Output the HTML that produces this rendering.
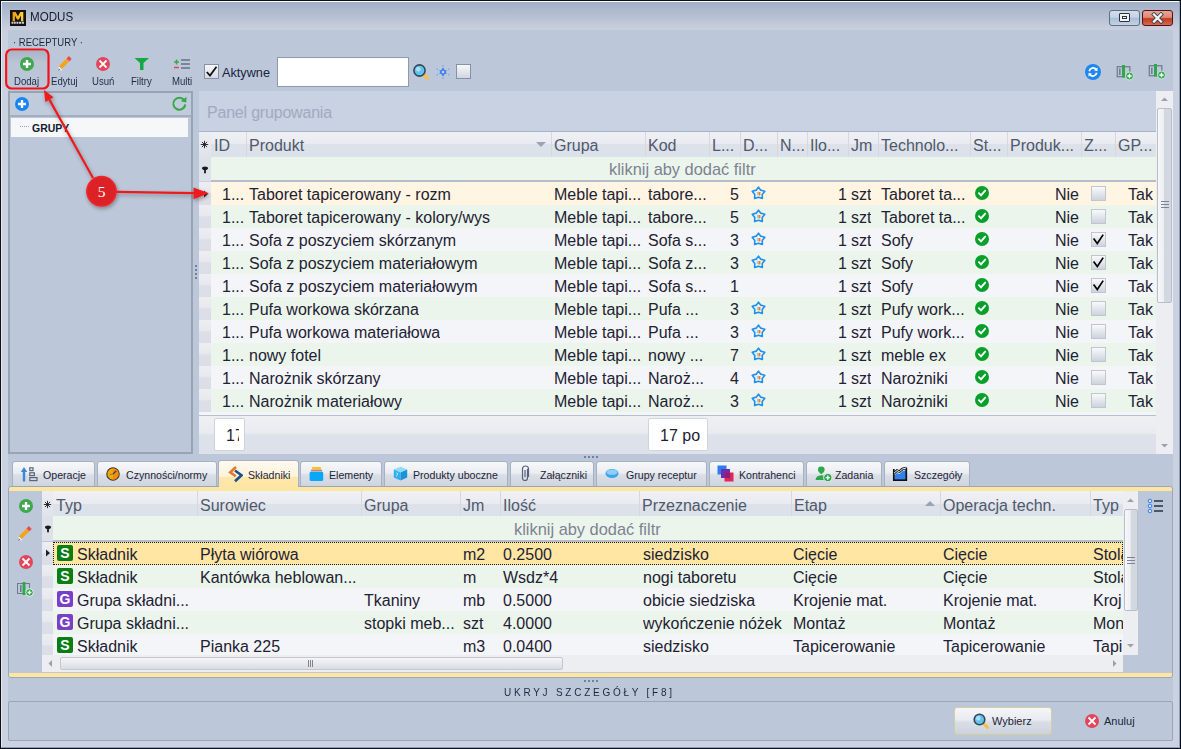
<!DOCTYPE html><html><head><meta charset="utf-8"><style>
*{box-sizing:border-box;margin:0;padding:0}
html,body{width:1181px;height:749px;overflow:hidden;background:#bccadb;font-family:"Liberation Sans", sans-serif;}
.a{position:absolute}
.t{position:absolute;white-space:nowrap;line-height:1}
.cell{position:absolute;white-space:nowrap;overflow:hidden;font-size:16px;line-height:25px;color:#1e2233}
.hd{position:absolute;white-space:nowrap;overflow:hidden;font-size:16px;line-height:27px;color:#4f596b}
</style></head><body>
<div class="a" style="left:0;top:0;width:1181px;height:749px;background:#0b0f18"></div>
<div class="a" style="left:1px;top:1px;width:1179px;height:747px;background:#8d9dbd"></div>
<div class="a" style="left:1px;top:1px;width:1178px;height:746px;background:#e6ebf3"></div>
<div class="a" style="left:1px;top:1px;width:1178px;height:1px;background:#fbfcff"></div>
<div class="a" style="left:2px;top:2px;width:1177px;height:745px;background:linear-gradient(#a2afc8 0px,#c9cfdd 27px,#cbd2df 40px,#cbd2df 100%)"></div>
<div class="a" style="left:8px;top:30px;width:1165px;height:711px;background:#bcc8d9"></div>
<svg class="a" style="left:10px;top:10px" width="16" height="16" viewBox="0 0 16 16"><defs><linearGradient id="lg" x1="0" x2="1" y1="0" y2="0"><stop offset="0" stop-color="#f39a0c"/><stop offset="1" stop-color="#ffd43a"/></linearGradient></defs><rect x="0" y="0" width="16" height="16" fill="#121212"/><path d="M2.6 11.2 V2 H5.6 L7.95 6.3 L10.3 2 H13.3 V11.2 H11 V5.6 L8.8 9.6 H7.1 L4.9 5.6 V11.2 Z" fill="url(#lg)"/><path d="M1.5 12.7 H3.5 M4 12.7 H5.8 M6.4 12.7 H8.4 M9 12.7 H11 M11.6 12.7 H14" stroke="#cfcfcf" stroke-width="2" /></svg>
<div class="t" style="left:30px;top:10px;font-size:11.6px;color:#141a2e;transform:scaleY(1.08);transform-origin:0 0">MODUS</div>
<div class="a" style="left:1109px;top:10px;width:31px;height:16px;border:1px solid #5d6e85;border-radius:3px;background:linear-gradient(#d3deea 0%,#c6d3e3 45%,#a9bdd4 50%,#c3d3e5 100%)"></div>
<div class="a" style="left:1119px;top:13px;width:11px;height:9px;border:1px solid #2a3344;border-radius:1px;background:#f2f2f2"></div>
<div class="a" style="left:1122px;top:16px;width:5px;height:3px;border:1px solid #2a3344"></div>
<div class="a" style="left:1142px;top:10px;width:31px;height:16px;border:1px solid #52121a;border-radius:3px;background:linear-gradient(#eaa493 0%,#de8b77 45%,#c03c1e 55%,#d86a52 100%)"></div>
<svg class="a" style="left:1150px;top:12px" width="15" height="12" viewBox="0 0 15 12"><path d="M4 2.5 L11 9.5 M11 2.5 L4 9.5" stroke="#3a3f4f" stroke-width="4" stroke-linecap="square"/><path d="M4 2.5 L11 9.5 M11 2.5 L4 9.5" stroke="#f4f4f4" stroke-width="2.3" stroke-linecap="square"/></svg>
<div class="t" style="left:13px;top:37px;font-size:9.5px;color:#1e2740;transform:scaleY(1.15);transform-origin:0 0">· RECEPTURY ·</div>
<div class="a" style="left:8px;top:51px;width:39px;height:37px;background:linear-gradient(#a9b4c6,#b9c4d4 30%,#bcc7d7)"></div>
<svg class="a" style="left:20px;top:57px" width="14" height="14" viewBox="0 0 14 14"><circle cx="7" cy="7" r="7" fill="#3fa84e"/><path d="M3 7 H11 M7 3 V11" stroke="#fff" stroke-width="2.4"/></svg>
<svg class="a" style="left:57px;top:56px" width="16" height="16" viewBox="0 0 16 16"><path d="M3.2 11.6 L11.2 3.6" stroke="#f7a21b" stroke-width="4"/><path d="M11 3.8 L13.3 1.5" stroke="#e4485e" stroke-width="4"/><path d="M2.6 12.2 L4 13.6 M1.8 11.4 L4.6 14.2" stroke="#fff" stroke-width="1.3"/><path d="M1 15 L2.5 12.5 L3.5 13.5 Z" fill="#6b7585"/></svg>
<svg class="a" style="left:96px;top:57px" width="14" height="14" viewBox="0 0 14 14"><circle cx="7" cy="7" r="7" fill="#e3465b"/><path d="M3.5 3.5 L10.5 10.5 M10.5 3.5 L3.5 10.5" stroke="#fff" stroke-width="1.8"/></svg>
<svg class="a" style="left:134px;top:57px" width="16" height="14" viewBox="0 0 16 14"><path d="M0.5 1 H15 L9.5 6 V13 H6 V6 Z" fill="#17a843"/></svg>
<svg class="a" style="left:173px;top:57px" width="18" height="14" viewBox="0 0 18 14"><path d="M1 5 H6 M3.5 2.5 V7.5" stroke="#39a84a" stroke-width="1.5"/><path d="M1 10.5 H6" stroke="#e3465b" stroke-width="1.5"/><path d="M8 3 H17 M8 7 H17 M8 11 H17" stroke="#7b8698" stroke-width="2"/></svg>
<div class="t" style="left:14px;top:76px;font-size:9.6px;color:#1f2a44;transform:scaleY(1.15);transform-origin:0 0">Dodaj</div>
<div class="t" style="left:51px;top:76px;font-size:9.6px;color:#1f2a44;transform:scaleY(1.15);transform-origin:0 0">Edytuj</div>
<div class="t" style="left:92px;top:76px;font-size:9.6px;color:#1f2a44;transform:scaleY(1.15);transform-origin:0 0">Usuń</div>
<div class="t" style="left:131px;top:76px;font-size:9.6px;color:#1f2a44;transform:scaleY(1.15);transform-origin:0 0">Filtry</div>
<div class="t" style="left:172px;top:76px;font-size:9.6px;color:#1f2a44;transform:scaleY(1.15);transform-origin:0 0">Multi</div>
<div class="a" style="left:204px;top:64px;width:15px;height:15px;border:1px solid #8592a6;background:linear-gradient(#f7f8fa,#d5dae3)"></div>
<svg class="a" style="left:205px;top:65px" width="13" height="13" viewBox="0 0 13 13"><path d="M1.8 7 L5 10.6 L11.5 1.8" stroke="#111" stroke-width="1.8" fill="none"/></svg>
<div class="t" style="left:222px;top:67px;font-size:12.7px;color:#1b2340">Aktywne</div>
<div class="a" style="left:277px;top:57px;width:132px;height:30px;border:1px solid #8e9aab;background:#fff"></div>
<svg class="a" style="left:411px;top:62px" width="19" height="19" viewBox="0 0 19 19"><path d="M12.5 12.5 L16.5 16.5" stroke="#f8bf45" stroke-width="3" stroke-linecap="round"/><circle cx="8.5" cy="8.5" r="5.6" fill="#62c4ec" stroke="#3b4656" stroke-width="1.6"/><circle cx="7.3" cy="7.3" r="2.3" fill="#a8e2f8"/></svg>
<svg class="a" style="left:436px;top:65px" width="14" height="14" viewBox="0 0 14 14"><path d="M7 2.2 L10.8 8.8 H3.2 Z" fill="#3a80f2"/><path d="M7 11.8 L10.8 5.2 H3.2 Z" fill="#3a80f2"/><circle cx="7" cy="7" r="1.3" fill="#c6d6f2"/><path d="M7 0 V1.3 M7 12.7 V14 M1.2 3.6 L1.2 4.9 M12.8 3.6 L12.8 4.9 M1.2 9.1 L1.2 10.4 M12.8 9.1 L12.8 10.4" stroke="#5a95f0" stroke-width="1"/></svg>
<div class="a" style="left:456px;top:64px;width:15px;height:15px;border:1px solid #8592a6;background:linear-gradient(#f7f8fa,#d1d6df)"></div>
<svg class="a" style="left:1085px;top:64px" width="16" height="16" viewBox="0 0 16 16"><circle cx="8" cy="8" r="8" fill="#1e86f0"/><path d="M4.2 7.2 A4 4 0 0 1 11.3 5.6" stroke="#fff" stroke-width="1.8" fill="none"/><path d="M12.6 3.6 L12.4 7.2 L9 6.2 Z" fill="#fff"/><path d="M11.8 8.8 A4 4 0 0 1 4.7 10.4" stroke="#fff" stroke-width="1.8" fill="none"/><path d="M3.4 12.4 L3.6 8.8 L7 9.8 Z" fill="#fff"/></svg>
<svg class="a" style="left:1116px;top:64px" width="19" height="17" viewBox="0 0 19 17"><rect x="1.3" y="2.7" width="12.5" height="10" fill="none" stroke="#737f91" stroke-width="1.3"/><rect x="3" y="4.5" width="1.6" height="6.5" fill="#737f91"/><rect x="6" y="1" width="3" height="12.5" fill="#2ea84a"/><circle cx="13.5" cy="12" r="4" fill="#2ea84a" stroke="#dfe7ee" stroke-width="0.9"/><path d="M11.3 12 H15.7 M13.5 9.8 V14.2" stroke="#fff" stroke-width="1.4"/></svg>
<svg class="a" style="left:1148px;top:63px" width="19" height="17" viewBox="0 0 19 17"><rect x="1.3" y="2.7" width="12.5" height="10" fill="none" stroke="#737f91" stroke-width="1.3"/><rect x="3" y="4.5" width="1.6" height="6.5" fill="#737f91"/><rect x="6" y="1" width="3" height="12.5" fill="#2ea84a"/><circle cx="13.5" cy="12" r="4" fill="#2ea84a" stroke="#dfe7ee" stroke-width="0.9"/><path d="M11.3 12 H15.7 M13.5 9.8 V14.2" stroke="#fff" stroke-width="1.4"/></svg>
<div class="a" style="left:8px;top:91px;width:185px;height:363px;border:2px solid #98a3b4;background:#bcc8d9"></div>
<div class="a" style="left:10px;top:115px;width:181px;height:2px;background:#a3aebe"></div>
<div class="a" style="left:10px;top:93px;width:181px;height:22px;background:#c0cbdb"></div>
<svg class="a" style="left:15px;top:97px" width="14" height="14" viewBox="0 0 14 14"><circle cx="7" cy="7" r="7" fill="#1b84f5"/><path d="M3 7 H11 M7 3 V11" stroke="#fff" stroke-width="2.4"/></svg>
<svg class="a" style="left:171px;top:95px" width="17" height="17" viewBox="0 0 17 17"><path d="M13.2 5.2 A6 6 0 1 0 14.3 9.5" stroke="#36a848" stroke-width="2" fill="none"/><path d="M15.6 1.8 L15.2 7.6 L9.8 6.2 Z" fill="#36a848"/></svg>
<div class="a" style="left:11px;top:118px;width:177px;height:19px;background:#f6f7f9"></div>
<div class="a" style="left:20px;top:126px;width:9px;height:1px;border-top:1px dotted #9aa3b0"></div>
<div class="t" style="left:32px;top:123px;font-size:10.5px;font-weight:bold;color:#141b30">GRUPY</div>
<div class="a" style="left:195px;top:265px;width:2px;height:2px;background:#7081a0"></div>
<div class="a" style="left:195px;top:269px;width:2px;height:2px;background:#7081a0"></div>
<div class="a" style="left:195px;top:273px;width:2px;height:2px;background:#7081a0"></div>
<div class="a" style="left:195px;top:277px;width:2px;height:2px;background:#7081a0"></div>
<div class="a" style="left:199px;top:91px;width:972px;height:363px;background:#c8d2e2"></div>
<div class="t" style="left:207px;top:105px;font-size:16px;letter-spacing:-0.2px;color:#a0aabe">Panel grupowania</div>
<div class="a" style="left:199px;top:131px;width:957px;height:1px;background:#a9b3c4"></div>
<div class="a" style="left:199px;top:132px;width:957px;height:25px;background:linear-gradient(#f0f1f5 0%,#e9ebf1 47%,#dde1e9 48%,#dde1e9 100%)"></div>
<div class="a" style="left:246px;top:132px;width:1px;height:25px;background:#d3d8e1"></div>
<div class="hd" style="left:214px;top:132px;width:31px">ID</div>
<div class="a" style="left:551px;top:132px;width:1px;height:25px;background:#d3d8e1"></div>
<div class="hd" style="left:249px;top:132px;width:301px">Produkt</div>
<div class="a" style="left:645px;top:132px;width:1px;height:25px;background:#d3d8e1"></div>
<div class="hd" style="left:554px;top:132px;width:90px">Grupa</div>
<div class="a" style="left:709px;top:132px;width:1px;height:25px;background:#d3d8e1"></div>
<div class="hd" style="left:648px;top:132px;width:60px">Kod</div>
<div class="a" style="left:740px;top:132px;width:1px;height:25px;background:#d3d8e1"></div>
<div class="hd" style="left:712px;top:132px;width:27px">L...</div>
<div class="a" style="left:777px;top:132px;width:1px;height:25px;background:#d3d8e1"></div>
<div class="hd" style="left:743px;top:132px;width:33px">D...</div>
<div class="a" style="left:807px;top:132px;width:1px;height:25px;background:#d3d8e1"></div>
<div class="hd" style="left:780px;top:132px;width:26px">N...</div>
<div class="a" style="left:848px;top:132px;width:1px;height:25px;background:#d3d8e1"></div>
<div class="hd" style="left:810px;top:132px;width:37px">Ilo...</div>
<div class="a" style="left:878px;top:132px;width:1px;height:25px;background:#d3d8e1"></div>
<div class="hd" style="left:851px;top:132px;width:26px">Jm</div>
<div class="a" style="left:970px;top:132px;width:1px;height:25px;background:#d3d8e1"></div>
<div class="hd" style="left:881px;top:132px;width:88px">Technolo...</div>
<div class="a" style="left:1007px;top:132px;width:1px;height:25px;background:#d3d8e1"></div>
<div class="hd" style="left:973px;top:132px;width:33px">St...</div>
<div class="a" style="left:1081px;top:132px;width:1px;height:25px;background:#d3d8e1"></div>
<div class="hd" style="left:1010px;top:132px;width:70px">Produk...</div>
<div class="a" style="left:1115px;top:132px;width:1px;height:25px;background:#d3d8e1"></div>
<div class="hd" style="left:1084px;top:132px;width:30px">Z...</div>
<div class="a" style="left:1156px;top:132px;width:1px;height:25px;background:#d3d8e1"></div>
<div class="hd" style="left:1118px;top:132px;width:37px">GP...</div>
<svg class="a" style="left:536px;top:142px" width="10" height="6" viewBox="0 0 10 6"><path d="M0 0 H10 L5 5 Z" fill="#9aa4b3"/></svg>
<div class="a" style="left:199px;top:132px;width:12px;height:25px;background:linear-gradient(#eceef3,#dfe3ea)"></div>
<svg class="a" style="left:200px;top:140px" width="9" height="9" viewBox="0 0 9 9"><path d="M4.5 0.8 V8.2 M0.8 4.5 H8.2 M1.9 1.9 L7.1 7.1 M7.1 1.9 L1.9 7.1" stroke="#1a1a1a" stroke-width="0.9"/></svg>
<div class="a" style="left:199px;top:157px;width:957px;height:24px;background:#ebf5eb"></div>
<div class="a" style="left:199px;top:157px;width:12px;height:24px;background:#dde1e8"></div>
<svg class="a" style="left:201px;top:166px" width="8" height="8" viewBox="0 0 8 8"><ellipse cx="4" cy="2.3" rx="3" ry="1.8" fill="#1a1a1a"/><rect x="3.1" y="3.5" width="1.8" height="3.8" fill="#1a1a1a"/></svg>
<div class="t" style="left:609px;top:161px;font-size:16.4px;color:#7d8292">kliknij aby dodać filtr</div>
<div class="a" style="left:211px;top:180px;width:945px;height:2px;background:#b4bdcb"></div>
<div class="a" style="left:211px;top:182px;width:945px;height:23px;background:#fff5e2"></div>
<div class="a" style="left:199px;top:182px;width:12px;height:23px;background:linear-gradient(#eceef2 0%,#e7e9ee 45%,#dcdfe7 52%,#dbdee6 100%)"></div>
<div class="cell" style="left:222px;top:182px">1...</div>
<div class="cell" style="left:249px;top:182px">Taboret tapicerowany - rozm</div>
<div class="cell" style="left:554px;top:182px">Meble tapi...</div>
<div class="cell" style="left:648px;top:182px">tabore...</div>
<div class="cell" style="left:709px;top:182px;width:30px;text-align:right">5</div>
<svg class="a" style="left:751px;top:186px" width="15" height="14" viewBox="0 0 15 14"><path d="M7.50 1.2 L9.79 4.14 L13.78 5.26 L11.21 8.51 L11.38 12.4 L7.50 11.20 L3.62 12.4 L3.79 8.51 L1.22 5.26 L5.21 4.14 Z" fill="none" stroke="#1f8ff0" stroke-width="1.6" stroke-linejoin="round"/><rect x="5.8" y="5.8" width="1.8" height="3.4" fill="#9ccbf2"/><rect x="7.6" y="6" width="1.8" height="3.4" fill="#f77a10"/></svg>
<div class="cell" style="left:808px;top:182px;width:39px;text-align:right">1</div>
<div class="cell" style="left:851px;top:182px">szt</div>
<div class="cell" style="left:881px;top:182px">Taboret ta...</div>
<svg class="a" style="left:975px;top:186px" width="14" height="14" viewBox="0 0 14 14"><circle cx="7" cy="7" r="7" fill="#07a02b"/><path d="M3.9 7.2 L6 9.3 L10.2 4.6" stroke="#fff" stroke-width="1.9" fill="none" stroke-linecap="round"/></svg>
<div class="cell" style="left:1007px;top:182px;width:72px;text-align:right">Nie</div>
<div class="a" style="left:1091px;top:186px;width:15px;height:15px;border:1px solid #c0c5cf;background:linear-gradient(#f9fafb,#cdd3de)"></div>
<div class="cell" style="left:1128px;top:182px">Tak</div>
<div class="a" style="left:211px;top:205px;width:945px;height:23px;background:#ebf5eb"></div>
<div class="a" style="left:199px;top:205px;width:12px;height:23px;background:linear-gradient(#eceef2 0%,#e7e9ee 45%,#dcdfe7 52%,#dbdee6 100%)"></div>
<div class="cell" style="left:222px;top:205px">1...</div>
<div class="cell" style="left:249px;top:205px">Taboret tapicerowany - kolory/wys</div>
<div class="cell" style="left:554px;top:205px">Meble tapi...</div>
<div class="cell" style="left:648px;top:205px">tabore...</div>
<div class="cell" style="left:709px;top:205px;width:30px;text-align:right">5</div>
<svg class="a" style="left:751px;top:209px" width="15" height="14" viewBox="0 0 15 14"><path d="M7.50 1.2 L9.79 4.14 L13.78 5.26 L11.21 8.51 L11.38 12.4 L7.50 11.20 L3.62 12.4 L3.79 8.51 L1.22 5.26 L5.21 4.14 Z" fill="none" stroke="#1f8ff0" stroke-width="1.6" stroke-linejoin="round"/><rect x="5.8" y="5.8" width="1.8" height="3.4" fill="#9ccbf2"/><rect x="7.6" y="6" width="1.8" height="3.4" fill="#f77a10"/></svg>
<div class="cell" style="left:808px;top:205px;width:39px;text-align:right">1</div>
<div class="cell" style="left:851px;top:205px">szt</div>
<div class="cell" style="left:881px;top:205px">Taboret ta...</div>
<svg class="a" style="left:975px;top:209px" width="14" height="14" viewBox="0 0 14 14"><circle cx="7" cy="7" r="7" fill="#07a02b"/><path d="M3.9 7.2 L6 9.3 L10.2 4.6" stroke="#fff" stroke-width="1.9" fill="none" stroke-linecap="round"/></svg>
<div class="cell" style="left:1007px;top:205px;width:72px;text-align:right">Nie</div>
<div class="a" style="left:1091px;top:209px;width:15px;height:15px;border:1px solid #c0c5cf;background:linear-gradient(#f9fafb,#cdd3de)"></div>
<div class="cell" style="left:1128px;top:205px">Tak</div>
<div class="a" style="left:211px;top:228px;width:945px;height:23px;background:#f4f5f8"></div>
<div class="a" style="left:199px;top:228px;width:12px;height:23px;background:linear-gradient(#eceef2 0%,#e7e9ee 45%,#dcdfe7 52%,#dbdee6 100%)"></div>
<div class="cell" style="left:222px;top:228px">1...</div>
<div class="cell" style="left:249px;top:228px">Sofa z poszyciem skórzanym</div>
<div class="cell" style="left:554px;top:228px">Meble tapi...</div>
<div class="cell" style="left:648px;top:228px">Sofa s...</div>
<div class="cell" style="left:709px;top:228px;width:30px;text-align:right">3</div>
<svg class="a" style="left:751px;top:232px" width="15" height="14" viewBox="0 0 15 14"><path d="M7.50 1.2 L9.79 4.14 L13.78 5.26 L11.21 8.51 L11.38 12.4 L7.50 11.20 L3.62 12.4 L3.79 8.51 L1.22 5.26 L5.21 4.14 Z" fill="none" stroke="#1f8ff0" stroke-width="1.6" stroke-linejoin="round"/><rect x="5.8" y="5.8" width="1.8" height="3.4" fill="#9ccbf2"/><rect x="7.6" y="6" width="1.8" height="3.4" fill="#f77a10"/></svg>
<div class="cell" style="left:808px;top:228px;width:39px;text-align:right">1</div>
<div class="cell" style="left:851px;top:228px">szt</div>
<div class="cell" style="left:881px;top:228px">Sofy</div>
<svg class="a" style="left:975px;top:232px" width="14" height="14" viewBox="0 0 14 14"><circle cx="7" cy="7" r="7" fill="#07a02b"/><path d="M3.9 7.2 L6 9.3 L10.2 4.6" stroke="#fff" stroke-width="1.9" fill="none" stroke-linecap="round"/></svg>
<div class="cell" style="left:1007px;top:228px;width:72px;text-align:right">Nie</div>
<div class="a" style="left:1091px;top:232px;width:15px;height:15px;border:1px solid #c0c5cf;background:linear-gradient(#f9fafb,#cdd3de)"></div><svg class="a" style="left:1091px;top:232px" width="15" height="15" viewBox="0 0 15 15"><path d="M2.6 6.4 L6.3 11.4 L12.2 2.6" stroke="#000" stroke-width="1.7" fill="none"/></svg>
<div class="cell" style="left:1128px;top:228px">Tak</div>
<div class="a" style="left:211px;top:251px;width:945px;height:23px;background:#ebf5eb"></div>
<div class="a" style="left:199px;top:251px;width:12px;height:23px;background:linear-gradient(#eceef2 0%,#e7e9ee 45%,#dcdfe7 52%,#dbdee6 100%)"></div>
<div class="cell" style="left:222px;top:251px">1...</div>
<div class="cell" style="left:249px;top:251px">Sofa z poszyciem materiałowym</div>
<div class="cell" style="left:554px;top:251px">Meble tapi...</div>
<div class="cell" style="left:648px;top:251px">Sofa z...</div>
<div class="cell" style="left:709px;top:251px;width:30px;text-align:right">3</div>
<svg class="a" style="left:751px;top:255px" width="15" height="14" viewBox="0 0 15 14"><path d="M7.50 1.2 L9.79 4.14 L13.78 5.26 L11.21 8.51 L11.38 12.4 L7.50 11.20 L3.62 12.4 L3.79 8.51 L1.22 5.26 L5.21 4.14 Z" fill="none" stroke="#1f8ff0" stroke-width="1.6" stroke-linejoin="round"/><rect x="5.8" y="5.8" width="1.8" height="3.4" fill="#9ccbf2"/><rect x="7.6" y="6" width="1.8" height="3.4" fill="#f77a10"/></svg>
<div class="cell" style="left:808px;top:251px;width:39px;text-align:right">1</div>
<div class="cell" style="left:851px;top:251px">szt</div>
<div class="cell" style="left:881px;top:251px">Sofy</div>
<svg class="a" style="left:975px;top:255px" width="14" height="14" viewBox="0 0 14 14"><circle cx="7" cy="7" r="7" fill="#07a02b"/><path d="M3.9 7.2 L6 9.3 L10.2 4.6" stroke="#fff" stroke-width="1.9" fill="none" stroke-linecap="round"/></svg>
<div class="cell" style="left:1007px;top:251px;width:72px;text-align:right">Nie</div>
<div class="a" style="left:1091px;top:255px;width:15px;height:15px;border:1px solid #c0c5cf;background:linear-gradient(#f9fafb,#cdd3de)"></div><svg class="a" style="left:1091px;top:255px" width="15" height="15" viewBox="0 0 15 15"><path d="M2.6 6.4 L6.3 11.4 L12.2 2.6" stroke="#000" stroke-width="1.7" fill="none"/></svg>
<div class="cell" style="left:1128px;top:251px">Tak</div>
<div class="a" style="left:211px;top:274px;width:945px;height:23px;background:#f4f5f8"></div>
<div class="a" style="left:199px;top:274px;width:12px;height:23px;background:linear-gradient(#eceef2 0%,#e7e9ee 45%,#dcdfe7 52%,#dbdee6 100%)"></div>
<div class="cell" style="left:222px;top:274px">1...</div>
<div class="cell" style="left:249px;top:274px">Sofa z poszyciem materiałowym</div>
<div class="cell" style="left:554px;top:274px">Meble tapi...</div>
<div class="cell" style="left:648px;top:274px">Sofa s...</div>
<div class="cell" style="left:709px;top:274px;width:30px;text-align:right">1</div>
<div class="cell" style="left:808px;top:274px;width:39px;text-align:right">1</div>
<div class="cell" style="left:851px;top:274px">szt</div>
<div class="cell" style="left:881px;top:274px">Sofy</div>
<svg class="a" style="left:975px;top:278px" width="14" height="14" viewBox="0 0 14 14"><circle cx="7" cy="7" r="7" fill="#07a02b"/><path d="M3.9 7.2 L6 9.3 L10.2 4.6" stroke="#fff" stroke-width="1.9" fill="none" stroke-linecap="round"/></svg>
<div class="cell" style="left:1007px;top:274px;width:72px;text-align:right">Nie</div>
<div class="a" style="left:1091px;top:278px;width:15px;height:15px;border:1px solid #c0c5cf;background:linear-gradient(#f9fafb,#cdd3de)"></div><svg class="a" style="left:1091px;top:278px" width="15" height="15" viewBox="0 0 15 15"><path d="M2.6 6.4 L6.3 11.4 L12.2 2.6" stroke="#000" stroke-width="1.7" fill="none"/></svg>
<div class="cell" style="left:1128px;top:274px">Tak</div>
<div class="a" style="left:211px;top:297px;width:945px;height:23px;background:#ebf5eb"></div>
<div class="a" style="left:199px;top:297px;width:12px;height:23px;background:linear-gradient(#eceef2 0%,#e7e9ee 45%,#dcdfe7 52%,#dbdee6 100%)"></div>
<div class="cell" style="left:222px;top:297px">1...</div>
<div class="cell" style="left:249px;top:297px">Pufa workowa skórzana</div>
<div class="cell" style="left:554px;top:297px">Meble tapi...</div>
<div class="cell" style="left:648px;top:297px">Pufa ...</div>
<div class="cell" style="left:709px;top:297px;width:30px;text-align:right">3</div>
<svg class="a" style="left:751px;top:301px" width="15" height="14" viewBox="0 0 15 14"><path d="M7.50 1.2 L9.79 4.14 L13.78 5.26 L11.21 8.51 L11.38 12.4 L7.50 11.20 L3.62 12.4 L3.79 8.51 L1.22 5.26 L5.21 4.14 Z" fill="none" stroke="#1f8ff0" stroke-width="1.6" stroke-linejoin="round"/><rect x="5.8" y="5.8" width="1.8" height="3.4" fill="#9ccbf2"/><rect x="7.6" y="6" width="1.8" height="3.4" fill="#f77a10"/></svg>
<div class="cell" style="left:808px;top:297px;width:39px;text-align:right">1</div>
<div class="cell" style="left:851px;top:297px">szt</div>
<div class="cell" style="left:881px;top:297px">Pufy work...</div>
<svg class="a" style="left:975px;top:301px" width="14" height="14" viewBox="0 0 14 14"><circle cx="7" cy="7" r="7" fill="#07a02b"/><path d="M3.9 7.2 L6 9.3 L10.2 4.6" stroke="#fff" stroke-width="1.9" fill="none" stroke-linecap="round"/></svg>
<div class="cell" style="left:1007px;top:297px;width:72px;text-align:right">Nie</div>
<div class="a" style="left:1091px;top:301px;width:15px;height:15px;border:1px solid #c0c5cf;background:linear-gradient(#f9fafb,#cdd3de)"></div>
<div class="cell" style="left:1128px;top:297px">Tak</div>
<div class="a" style="left:211px;top:320px;width:945px;height:23px;background:#f4f5f8"></div>
<div class="a" style="left:199px;top:320px;width:12px;height:23px;background:linear-gradient(#eceef2 0%,#e7e9ee 45%,#dcdfe7 52%,#dbdee6 100%)"></div>
<div class="cell" style="left:222px;top:320px">1...</div>
<div class="cell" style="left:249px;top:320px">Pufa workowa materiałowa</div>
<div class="cell" style="left:554px;top:320px">Meble tapi...</div>
<div class="cell" style="left:648px;top:320px">Pufa ...</div>
<div class="cell" style="left:709px;top:320px;width:30px;text-align:right">3</div>
<svg class="a" style="left:751px;top:324px" width="15" height="14" viewBox="0 0 15 14"><path d="M7.50 1.2 L9.79 4.14 L13.78 5.26 L11.21 8.51 L11.38 12.4 L7.50 11.20 L3.62 12.4 L3.79 8.51 L1.22 5.26 L5.21 4.14 Z" fill="none" stroke="#1f8ff0" stroke-width="1.6" stroke-linejoin="round"/><rect x="5.8" y="5.8" width="1.8" height="3.4" fill="#9ccbf2"/><rect x="7.6" y="6" width="1.8" height="3.4" fill="#f77a10"/></svg>
<div class="cell" style="left:808px;top:320px;width:39px;text-align:right">1</div>
<div class="cell" style="left:851px;top:320px">szt</div>
<div class="cell" style="left:881px;top:320px">Pufy work...</div>
<svg class="a" style="left:975px;top:324px" width="14" height="14" viewBox="0 0 14 14"><circle cx="7" cy="7" r="7" fill="#07a02b"/><path d="M3.9 7.2 L6 9.3 L10.2 4.6" stroke="#fff" stroke-width="1.9" fill="none" stroke-linecap="round"/></svg>
<div class="cell" style="left:1007px;top:320px;width:72px;text-align:right">Nie</div>
<div class="a" style="left:1091px;top:324px;width:15px;height:15px;border:1px solid #c0c5cf;background:linear-gradient(#f9fafb,#cdd3de)"></div>
<div class="cell" style="left:1128px;top:320px">Tak</div>
<div class="a" style="left:211px;top:343px;width:945px;height:23px;background:#ebf5eb"></div>
<div class="a" style="left:199px;top:343px;width:12px;height:23px;background:linear-gradient(#eceef2 0%,#e7e9ee 45%,#dcdfe7 52%,#dbdee6 100%)"></div>
<div class="cell" style="left:222px;top:343px">1...</div>
<div class="cell" style="left:249px;top:343px">nowy fotel</div>
<div class="cell" style="left:554px;top:343px">Meble tapi...</div>
<div class="cell" style="left:648px;top:343px">nowy ...</div>
<div class="cell" style="left:709px;top:343px;width:30px;text-align:right">7</div>
<svg class="a" style="left:751px;top:347px" width="15" height="14" viewBox="0 0 15 14"><path d="M7.50 1.2 L9.79 4.14 L13.78 5.26 L11.21 8.51 L11.38 12.4 L7.50 11.20 L3.62 12.4 L3.79 8.51 L1.22 5.26 L5.21 4.14 Z" fill="none" stroke="#1f8ff0" stroke-width="1.6" stroke-linejoin="round"/><rect x="5.8" y="5.8" width="1.8" height="3.4" fill="#9ccbf2"/><rect x="7.6" y="6" width="1.8" height="3.4" fill="#f77a10"/></svg>
<div class="cell" style="left:808px;top:343px;width:39px;text-align:right">1</div>
<div class="cell" style="left:851px;top:343px">szt</div>
<div class="cell" style="left:881px;top:343px">meble ex</div>
<svg class="a" style="left:975px;top:347px" width="14" height="14" viewBox="0 0 14 14"><circle cx="7" cy="7" r="7" fill="#07a02b"/><path d="M3.9 7.2 L6 9.3 L10.2 4.6" stroke="#fff" stroke-width="1.9" fill="none" stroke-linecap="round"/></svg>
<div class="cell" style="left:1007px;top:343px;width:72px;text-align:right">Nie</div>
<div class="a" style="left:1091px;top:347px;width:15px;height:15px;border:1px solid #c0c5cf;background:linear-gradient(#f9fafb,#cdd3de)"></div>
<div class="cell" style="left:1128px;top:343px">Tak</div>
<div class="a" style="left:211px;top:366px;width:945px;height:23px;background:#f4f5f8"></div>
<div class="a" style="left:199px;top:366px;width:12px;height:23px;background:linear-gradient(#eceef2 0%,#e7e9ee 45%,#dcdfe7 52%,#dbdee6 100%)"></div>
<div class="cell" style="left:222px;top:366px">1...</div>
<div class="cell" style="left:249px;top:366px">Narożnik skórzany</div>
<div class="cell" style="left:554px;top:366px">Meble tapi...</div>
<div class="cell" style="left:648px;top:366px">Naroż...</div>
<div class="cell" style="left:709px;top:366px;width:30px;text-align:right">4</div>
<svg class="a" style="left:751px;top:370px" width="15" height="14" viewBox="0 0 15 14"><path d="M7.50 1.2 L9.79 4.14 L13.78 5.26 L11.21 8.51 L11.38 12.4 L7.50 11.20 L3.62 12.4 L3.79 8.51 L1.22 5.26 L5.21 4.14 Z" fill="none" stroke="#1f8ff0" stroke-width="1.6" stroke-linejoin="round"/><rect x="5.8" y="5.8" width="1.8" height="3.4" fill="#9ccbf2"/><rect x="7.6" y="6" width="1.8" height="3.4" fill="#f77a10"/></svg>
<div class="cell" style="left:808px;top:366px;width:39px;text-align:right">1</div>
<div class="cell" style="left:851px;top:366px">szt</div>
<div class="cell" style="left:881px;top:366px">Narożniki</div>
<svg class="a" style="left:975px;top:370px" width="14" height="14" viewBox="0 0 14 14"><circle cx="7" cy="7" r="7" fill="#07a02b"/><path d="M3.9 7.2 L6 9.3 L10.2 4.6" stroke="#fff" stroke-width="1.9" fill="none" stroke-linecap="round"/></svg>
<div class="cell" style="left:1007px;top:366px;width:72px;text-align:right">Nie</div>
<div class="a" style="left:1091px;top:370px;width:15px;height:15px;border:1px solid #c0c5cf;background:linear-gradient(#f9fafb,#cdd3de)"></div>
<div class="cell" style="left:1128px;top:366px">Tak</div>
<div class="a" style="left:211px;top:389px;width:945px;height:23px;background:#ebf5eb"></div>
<div class="a" style="left:199px;top:389px;width:12px;height:23px;background:linear-gradient(#eceef2 0%,#e7e9ee 45%,#dcdfe7 52%,#dbdee6 100%)"></div>
<div class="cell" style="left:222px;top:389px">1...</div>
<div class="cell" style="left:249px;top:389px">Narożnik materiałowy</div>
<div class="cell" style="left:554px;top:389px">Meble tapi...</div>
<div class="cell" style="left:648px;top:389px">Naroż...</div>
<div class="cell" style="left:709px;top:389px;width:30px;text-align:right">3</div>
<svg class="a" style="left:751px;top:393px" width="15" height="14" viewBox="0 0 15 14"><path d="M7.50 1.2 L9.79 4.14 L13.78 5.26 L11.21 8.51 L11.38 12.4 L7.50 11.20 L3.62 12.4 L3.79 8.51 L1.22 5.26 L5.21 4.14 Z" fill="none" stroke="#1f8ff0" stroke-width="1.6" stroke-linejoin="round"/><rect x="5.8" y="5.8" width="1.8" height="3.4" fill="#9ccbf2"/><rect x="7.6" y="6" width="1.8" height="3.4" fill="#f77a10"/></svg>
<div class="cell" style="left:808px;top:389px;width:39px;text-align:right">1</div>
<div class="cell" style="left:851px;top:389px">szt</div>
<div class="cell" style="left:881px;top:389px">Narożniki</div>
<svg class="a" style="left:975px;top:393px" width="14" height="14" viewBox="0 0 14 14"><circle cx="7" cy="7" r="7" fill="#07a02b"/><path d="M3.9 7.2 L6 9.3 L10.2 4.6" stroke="#fff" stroke-width="1.9" fill="none" stroke-linecap="round"/></svg>
<div class="cell" style="left:1007px;top:389px;width:72px;text-align:right">Nie</div>
<div class="a" style="left:1091px;top:393px;width:15px;height:15px;border:1px solid #c0c5cf;background:linear-gradient(#f9fafb,#cdd3de)"></div>
<div class="cell" style="left:1128px;top:389px">Tak</div>
<svg class="a" style="left:203px;top:190px" width="6" height="8" viewBox="0 0 6 8"><path d="M1 0.5 L5 4 L1 7.5 Z" fill="#1e2230"/></svg>
<div class="a" style="left:199px;top:412px;width:957px;height:3px;background:#f4f5f8"></div>
<div class="a" style="left:199px;top:415px;width:957px;height:1px;background:#b7bfcc"></div>
<div class="a" style="left:199px;top:416px;width:957px;height:38px;background:linear-gradient(#eef0f4 0%,#e8ebf0 45%,#dde1e9 50%,#dde1e9 100%)"></div>
<div class="a" style="left:214px;top:418px;width:31px;height:33px;border:1px solid #cdd2db;border-radius:2px;background:#fff;overflow:hidden"><div class="a" style="left:0;top:0;width:24px;height:31px;overflow:hidden"><div class="cell" style="left:11px;top:4px;">17</div></div></div>
<div class="a" style="left:648px;top:418px;width:60px;height:33px;border:1px solid #d0d5de;border-radius:2px;background:#fff"><div class="cell" style="left:11px;top:4px;">17 po</div></div>
<div class="a" style="left:1156px;top:91px;width:17px;height:363px;background:#eceef2"></div>
<svg class="a" style="left:1160px;top:96px" width="9" height="6" viewBox="0 0 9 6"><path d="M1 5 L4.5 1.5 L8 5 Z" fill="#9aa2ae"/></svg>
<svg class="a" style="left:1160px;top:443px" width="9" height="6" viewBox="0 0 9 6"><path d="M1 1 L4.5 4.5 L8 1 Z" fill="#9aa2ae"/></svg>
<div class="a" style="left:1157px;top:108px;width:15px;height:195px;border:1px solid #b9bfc9;border-radius:2px;background:linear-gradient(90deg,#f7f8fa 0%,#eceef2 45%,#d3d8e0 50%,#d3d8e0 100%)"></div>
<div class="a" style="left:1161px;top:201px;width:8px;height:7px;border-top:1px solid #7d8593;border-bottom:1px solid #7d8593"></div>
<div class="a" style="left:1161px;top:204px;width:8px;height:1px;background:#7d8593"></div>
<div class="a" style="left:584px;top:456px;width:2px;height:2px;background:#7081a0"></div>
<div class="a" style="left:588px;top:456px;width:2px;height:2px;background:#7081a0"></div>
<div class="a" style="left:592px;top:456px;width:2px;height:2px;background:#7081a0"></div>
<div class="a" style="left:596px;top:456px;width:2px;height:2px;background:#7081a0"></div>
<div class="a" style="left:12px;top:461px;width:83px;height:26px;border:1px solid #a7b1c1;border-bottom:1px solid #a7b1c1;border-radius:3px 3px 0 0;background:linear-gradient(#f7f8fa 0%,#eaedf1 45%,#dadee6 55%,#cfd5df 100%)"></div>
<svg class="a" style="left:19px;top:466px" width="20" height="17" viewBox="0 0 20 17"><path d="M5 5 V15.5" stroke="#3d86de" stroke-width="2.4"/><path d="M1.8 6 L5 1 L8.2 6 Z" fill="#3d86de"/><rect x="10.8" y="1.8" width="3.2" height="2.8" fill="none" stroke="#5b6575" stroke-width="1.2"/><rect x="10.8" y="6.8" width="4.6" height="2.8" fill="none" stroke="#5b6575" stroke-width="1.2"/><rect x="10.8" y="11.6" width="7.2" height="3" fill="none" stroke="#5b6575" stroke-width="1.2"/></svg>
<div class="t" style="left:43px;top:470px;font-size:10.6px;color:#1d2438">Operacje</div>
<div class="a" style="left:97px;top:461px;width:120px;height:26px;border:1px solid #a7b1c1;border-bottom:1px solid #a7b1c1;border-radius:3px 3px 0 0;background:linear-gradient(#f7f8fa 0%,#eaedf1 45%,#dadee6 55%,#cfd5df 100%)"></div>
<svg class="a" style="left:106px;top:467px" width="14" height="14" viewBox="0 0 14 14"><circle cx="7" cy="7" r="6.2" fill="#f8a800" stroke="#3a3530" stroke-width="1.1"/><path d="M7 1.5 A5.5 5.5 0 0 1 7 12.5 Z" fill="#f68b0a"/><path d="M7 7 L10.2 3.8" stroke="#253a70" stroke-width="1.2"/><path d="M7 7 L3.6 7.6" stroke="#7a8a70" stroke-width="1.1"/></svg>
<div class="t" style="left:126px;top:470px;font-size:10.6px;color:#1d2438">Czynności/normy</div>
<div class="a" style="left:218px;top:460px;width:81px;height:27px;border:1px solid #a7b1c1;border-bottom:none;border-radius:3px 3px 0 0;background:linear-gradient(#fefaf0 0%,#fdf3dc 60%,#fde8ab 62%,#fde6a4 100%)"></div>
<svg class="a" style="left:228px;top:466px" width="15" height="17" viewBox="0 0 15 17"><path d="M8 1 L2.2 6.3 L7.8 10.2" stroke="#e8782a" stroke-width="2.6" fill="none"/><path d="M7 4.5 L13.5 9.3 L7 15.3" stroke="#1b4f8c" stroke-width="2.6" fill="none"/></svg>
<div class="t" style="left:248px;top:470px;font-size:10.6px;color:#1d2438">Składniki</div>
<div class="a" style="left:300px;top:461px;width:82px;height:26px;border:1px solid #a7b1c1;border-bottom:1px solid #a7b1c1;border-radius:3px 3px 0 0;background:linear-gradient(#f7f8fa 0%,#eaedf1 45%,#dadee6 55%,#cfd5df 100%)"></div>
<svg class="a" style="left:309px;top:466px" width="15" height="16" viewBox="0 0 15 16"><rect x="3" y="1" width="9" height="2.2" rx="0.8" fill="#f8c61a"/><rect x="2" y="3.6" width="11" height="1.3" fill="#f0643c"/><rect x="0.6" y="5.6" width="13.6" height="9.4" rx="1.6" fill="#08a8f8"/></svg>
<div class="t" style="left:329px;top:470px;font-size:10.6px;color:#1d2438">Elementy</div>
<div class="a" style="left:384px;top:461px;width:124px;height:26px;border:1px solid #a7b1c1;border-bottom:1px solid #a7b1c1;border-radius:3px 3px 0 0;background:linear-gradient(#f7f8fa 0%,#eaedf1 45%,#dadee6 55%,#cfd5df 100%)"></div>
<svg class="a" style="left:393px;top:466px" width="15" height="15" viewBox="0 0 15 15"><path d="M7.5 0.8 L14.2 3.6 L7.5 6.4 L0.8 3.6 Z" fill="#8cdcfb"/><path d="M0.8 3.6 L7.5 6.4 V14.4 L0.8 11.6 Z" fill="#30b0f0"/><path d="M14.2 3.6 L7.5 6.4 V14.4 L14.2 11.6 Z" fill="#1d92d8"/><path d="M3.2 7 Q4.6 6.6 4.6 8 Q4.6 9 3.6 9.4 V10.4" stroke="#d8f2ff" stroke-width="0.8" fill="none"/></svg>
<div class="t" style="left:413px;top:470px;font-size:10.6px;color:#1d2438">Produkty uboczne</div>
<div class="a" style="left:510px;top:461px;width:84px;height:26px;border:1px solid #a7b1c1;border-bottom:1px solid #a7b1c1;border-radius:3px 3px 0 0;background:linear-gradient(#f7f8fa 0%,#eaedf1 45%,#dadee6 55%,#cfd5df 100%)"></div>
<svg class="a" style="left:520px;top:465px" width="11" height="18" viewBox="0 0 11 18"><path d="M7.5 4 V13 A2.5 2.5 0 0 1 2.5 13 V4 A3 3 0 0 1 8.5 4 V12 M5 5 V12" stroke="#55627a" stroke-width="1.2" fill="none"/></svg>
<div class="t" style="left:540px;top:470px;font-size:10.6px;color:#1d2438">Załączniki</div>
<div class="a" style="left:596px;top:461px;width:111px;height:26px;border:1px solid #a7b1c1;border-bottom:1px solid #a7b1c1;border-radius:3px 3px 0 0;background:linear-gradient(#f7f8fa 0%,#eaedf1 45%,#dadee6 55%,#cfd5df 100%)"></div>
<svg class="a" style="left:605px;top:467px" width="14" height="12" viewBox="0 0 14 12"><ellipse cx="7" cy="6.5" rx="6.5" ry="4.5" fill="#3ba6ea"/><ellipse cx="7" cy="5.2" rx="5.2" ry="2.6" fill="#8fd0f6"/></svg>
<div class="t" style="left:626px;top:470px;font-size:10.6px;color:#1d2438">Grupy receptur</div>
<div class="a" style="left:709px;top:461px;width:95px;height:26px;border:1px solid #a7b1c1;border-bottom:1px solid #a7b1c1;border-radius:3px 3px 0 0;background:linear-gradient(#f7f8fa 0%,#eaedf1 45%,#dadee6 55%,#cfd5df 100%)"></div>
<svg class="a" style="left:717px;top:465px" width="17" height="17" viewBox="0 0 17 17"><rect x="0.5" y="0.5" width="9" height="9" fill="#2f7cf0"/><rect x="4" y="4" width="9" height="9" fill="#6a2fb0"/><rect x="7.5" y="7.5" width="9" height="9" fill="#e2245a"/><rect x="7.5" y="7.5" width="5.5" height="5.5" fill="#8a1f7a"/></svg>
<div class="t" style="left:739px;top:470px;font-size:10.6px;color:#1d2438">Kontrahenci</div>
<div class="a" style="left:806px;top:461px;width:76px;height:26px;border:1px solid #a7b1c1;border-bottom:1px solid #a7b1c1;border-radius:3px 3px 0 0;background:linear-gradient(#f7f8fa 0%,#eaedf1 45%,#dadee6 55%,#cfd5df 100%)"></div>
<svg class="a" style="left:815px;top:465px" width="18" height="17" viewBox="0 0 18 17"><path d="M6.3 1.5 A3.4 3.4 0 0 1 9.7 4.9 Q9.7 6.8 6.3 9.2 Q2.9 6.8 2.9 4.9 A3.4 3.4 0 0 1 6.3 1.5 Z" fill="#2ea84a"/><path d="M0.5 15 Q1 10.5 6.3 10.2 Q9.5 10.3 11 12 V15 Z" fill="#2ea84a"/><circle cx="12.8" cy="12.6" r="4.2" fill="#2ea84a" stroke="#e8eef2" stroke-width="1"/><path d="M10.7 12.6 H14.9 M12.8 10.5 V14.7" stroke="#fff" stroke-width="1.4"/></svg>
<div class="t" style="left:835px;top:470px;font-size:10.6px;color:#1d2438">Zadania</div>
<div class="a" style="left:884px;top:461px;width:86px;height:26px;border:1px solid #a7b1c1;border-bottom:1px solid #a7b1c1;border-radius:3px 3px 0 0;background:linear-gradient(#f7f8fa 0%,#eaedf1 45%,#dadee6 55%,#cfd5df 100%)"></div>
<svg class="a" style="left:892px;top:466px" width="17" height="16" viewBox="0 0 17 16"><path d="M2.3 9.5 L5 7 L7.5 8 L10.5 5.2 L14 4.2 V13.6 H2.3 Z" fill="#2f80f0"/><path d="M1.8 3 V14.2 H14.3 V1.5" stroke="#111" stroke-width="1.7" fill="none"/><path d="M2 7.2 L5 4.6 L7.5 5.6 L10.5 3 L14 2" stroke="#111" stroke-width="2.6" fill="none"/><path d="M2 7.2 L5 4.6 L7.5 5.6 L10.5 3 L14 2" stroke="#fff" stroke-width="1" fill="none"/></svg>
<div class="t" style="left:914px;top:470px;font-size:10.6px;color:#1d2438">Szczegóły</div>
<div class="a" style="left:8px;top:486px;width:1165px;height:192px;border:1px solid #9ba7b9;border-radius:3px;background:#bcc8d9"></div>
<div class="a" style="left:9px;top:487px;width:1163px;height:4px;background:#fee6a0;border-radius:2px 2px 0 0"></div>
<div class="a" style="left:219px;top:485px;width:79px;height:3px;background:#fde6a4"></div>
<div class="a" style="left:9px;top:673px;width:1163px;height:4px;background:#fee6a0;border-radius:0 0 2px 2px"></div>
<svg class="a" style="left:19px;top:499px" width="14" height="14" viewBox="0 0 14 14"><circle cx="7" cy="7" r="7" fill="#3fa84e"/><path d="M3 7 H11 M7 3 V11" stroke="#fff" stroke-width="2.4"/></svg>
<svg class="a" style="left:17px;top:526px" width="16" height="16" viewBox="0 0 16 16"><path d="M3.2 11.6 L11.2 3.6" stroke="#f7a21b" stroke-width="4"/><path d="M11 3.8 L13.3 1.5" stroke="#e4485e" stroke-width="4"/><path d="M2.6 12.2 L4 13.6 M1.8 11.4 L4.6 14.2" stroke="#fff" stroke-width="1.3"/><path d="M1 15 L2.5 12.5 L3.5 13.5 Z" fill="#6b7585"/></svg>
<svg class="a" style="left:19px;top:555px" width="14" height="14" viewBox="0 0 14 14"><circle cx="7" cy="7" r="7" fill="#e3465b"/><path d="M3.5 3.5 L10.5 10.5 M10.5 3.5 L3.5 10.5" stroke="#fff" stroke-width="1.8"/></svg>
<svg class="a" style="left:17px;top:581px" width="18" height="16" viewBox="0 0 18 16"><rect x="0.5" y="2.5" width="12" height="10" fill="none" stroke="#6f7b8d" stroke-width="1"/><rect x="3" y="4" width="1.5" height="7" fill="#6f7b8d"/><rect x="5.5" y="1" width="3" height="13" fill="#2ea84a"/><circle cx="12.5" cy="11.5" r="3.8" fill="#2ea84a" stroke="#fff" stroke-width="0.8"/><path d="M10.5 11.5 H14.5 M12.5 9.5 V13.5" stroke="#fff" stroke-width="1.3"/></svg>
<svg class="a" style="left:1147px;top:497px" width="18" height="17" viewBox="0 0 18 17"><circle cx="3" cy="4" r="1.8" fill="#cfe3fb" stroke="#3a7ee8" stroke-width="1"/><circle cx="3" cy="9" r="1.8" fill="#cfe3fb" stroke="#3a7ee8" stroke-width="1"/><circle cx="3" cy="14" r="1.8" fill="#cfe3fb" stroke="#3a7ee8" stroke-width="1"/><path d="M7 4 H16 M7 9 H16 M7 14 H16" stroke="#26304a" stroke-width="1.6"/></svg>
<div class="a" style="left:42px;top:491px;width:1081px;height:25px;background:linear-gradient(#f0f1f5 0%,#e9ebf1 50%,#dde1e9 51%,#dde1e9 100%)"></div>
<div class="a" style="left:197px;top:491px;width:1px;height:25px;background:#d3d8e1"></div>
<div class="hd" style="left:56px;top:492px;width:141px">Typ</div>
<div class="a" style="left:361px;top:491px;width:1px;height:25px;background:#d3d8e1"></div>
<div class="hd" style="left:200px;top:492px;width:161px">Surowiec</div>
<div class="a" style="left:460px;top:491px;width:1px;height:25px;background:#d3d8e1"></div>
<div class="hd" style="left:364px;top:492px;width:96px">Grupa</div>
<div class="a" style="left:500px;top:491px;width:1px;height:25px;background:#d3d8e1"></div>
<div class="hd" style="left:463px;top:492px;width:37px">Jm</div>
<div class="a" style="left:639px;top:491px;width:1px;height:25px;background:#d3d8e1"></div>
<div class="hd" style="left:503px;top:492px;width:136px">Ilość</div>
<div class="a" style="left:791px;top:491px;width:1px;height:25px;background:#d3d8e1"></div>
<div class="hd" style="left:642px;top:492px;width:149px">Przeznaczenie</div>
<div class="a" style="left:940px;top:491px;width:1px;height:25px;background:#d3d8e1"></div>
<div class="hd" style="left:794px;top:492px;width:146px">Etap</div>
<div class="a" style="left:1090px;top:491px;width:1px;height:25px;background:#d3d8e1"></div>
<div class="hd" style="left:943px;top:492px;width:147px">Operacja techn.</div>
<div class="a" style="left:1123px;top:491px;width:1px;height:25px;background:#d3d8e1"></div>
<div class="hd" style="left:1093px;top:492px;width:30px">Typ</div>
<svg class="a" style="left:925px;top:500px" width="10" height="6" viewBox="0 0 10 6"><path d="M0 6 H10 L5 1 Z" fill="#9aa4b3"/></svg>
<div class="a" style="left:42px;top:491px;width:11px;height:25px;background:linear-gradient(#eceef3,#dfe3ea)"></div>
<svg class="a" style="left:43px;top:500px" width="9" height="9" viewBox="0 0 9 9"><path d="M4.5 0.8 V8.2 M0.8 4.5 H8.2 M1.9 1.9 L7.1 7.1 M7.1 1.9 L1.9 7.1" stroke="#1a1a1a" stroke-width="0.9"/></svg>
<div class="a" style="left:42px;top:516px;width:1081px;height:25px;background:#ebf5eb"></div>
<div class="a" style="left:42px;top:516px;width:11px;height:25px;background:#dde1e8"></div>
<svg class="a" style="left:44px;top:525px" width="8" height="8" viewBox="0 0 8 8"><ellipse cx="4" cy="2.3" rx="3" ry="1.8" fill="#1a1a1a"/><rect x="3.1" y="3.5" width="1.8" height="3.8" fill="#1a1a1a"/></svg>
<div class="t" style="left:514px;top:521px;font-size:16.4px;color:#7d8292">kliknij aby dodać filtr</div>
<div class="a" style="left:53px;top:540px;width:1070px;height:2px;background:#b4bdcb"></div>
<div class="a" style="left:53px;top:542px;width:1070px;height:23px;background:#ffe6a3"></div>
<div class="a" style="left:42px;top:542px;width:11px;height:23px;background:linear-gradient(#eceef2 0%,#e7e9ee 45%,#dcdfe7 52%,#dbdee6 100%)"></div>
<div class="a" style="left:57px;top:545px;width:16px;height:16px;border-radius:2px;background:#0a7d14;color:#fff;font-size:14px;font-weight:bold;line-height:17px;text-align:center">S</div>
<div class="cell" style="left:77px;top:542px;width:118px">Składnik</div>
<div class="cell" style="left:200px;top:542px;width:160px">Płyta wiórowa</div>
<div class="cell" style="left:463px;top:542px;width:37px">m2</div>
<div class="cell" style="left:503px;top:542px;width:136px">0.2500</div>
<div class="cell" style="left:643px;top:542px;width:148px">siedzisko</div>
<div class="cell" style="left:793px;top:542px;width:146px">Cięcie</div>
<div class="cell" style="left:943px;top:542px;width:147px">Cięcie</div>
<div class="cell" style="left:1093px;top:542px;width:30px">Stola</div>
<div class="a" style="left:53px;top:565px;width:1070px;height:23px;background:#ebf5eb"></div>
<div class="a" style="left:42px;top:565px;width:11px;height:23px;background:linear-gradient(#eceef2 0%,#e7e9ee 45%,#dcdfe7 52%,#dbdee6 100%)"></div>
<div class="a" style="left:57px;top:568px;width:16px;height:16px;border-radius:2px;background:#0a7d14;color:#fff;font-size:14px;font-weight:bold;line-height:17px;text-align:center">S</div>
<div class="cell" style="left:77px;top:565px;width:118px">Składnik</div>
<div class="cell" style="left:200px;top:565px;width:160px">Kantówka heblowan...</div>
<div class="cell" style="left:463px;top:565px;width:37px">m</div>
<div class="cell" style="left:503px;top:565px;width:136px">Wsdz*4</div>
<div class="cell" style="left:643px;top:565px;width:148px">nogi taboretu</div>
<div class="cell" style="left:793px;top:565px;width:146px">Cięcie</div>
<div class="cell" style="left:943px;top:565px;width:147px">Cięcie</div>
<div class="cell" style="left:1093px;top:565px;width:30px">Stola</div>
<div class="a" style="left:53px;top:588px;width:1070px;height:23px;background:#f4f5f8"></div>
<div class="a" style="left:42px;top:588px;width:11px;height:23px;background:linear-gradient(#eceef2 0%,#e7e9ee 45%,#dcdfe7 52%,#dbdee6 100%)"></div>
<div class="a" style="left:57px;top:591px;width:16px;height:16px;border-radius:2px;background:#7a3fc8;color:#fff;font-size:14px;font-weight:bold;line-height:17px;text-align:center">G</div>
<div class="cell" style="left:77px;top:588px;width:118px">Grupa składni...</div>
<div class="cell" style="left:364px;top:588px;width:96px">Tkaniny</div>
<div class="cell" style="left:463px;top:588px;width:37px">mb</div>
<div class="cell" style="left:503px;top:588px;width:136px">0.5000</div>
<div class="cell" style="left:643px;top:588px;width:148px">obicie siedziska</div>
<div class="cell" style="left:793px;top:588px;width:146px">Krojenie mat.</div>
<div class="cell" style="left:943px;top:588px;width:147px">Krojenie mat.</div>
<div class="cell" style="left:1093px;top:588px;width:30px">Kroj</div>
<div class="a" style="left:53px;top:611px;width:1070px;height:23px;background:#ebf5eb"></div>
<div class="a" style="left:42px;top:611px;width:11px;height:23px;background:linear-gradient(#eceef2 0%,#e7e9ee 45%,#dcdfe7 52%,#dbdee6 100%)"></div>
<div class="a" style="left:57px;top:614px;width:16px;height:16px;border-radius:2px;background:#7a3fc8;color:#fff;font-size:14px;font-weight:bold;line-height:17px;text-align:center">G</div>
<div class="cell" style="left:77px;top:611px;width:118px">Grupa składni...</div>
<div class="cell" style="left:364px;top:611px;width:96px">stopki meb...</div>
<div class="cell" style="left:463px;top:611px;width:37px">szt</div>
<div class="cell" style="left:503px;top:611px;width:136px">4.0000</div>
<div class="cell" style="left:643px;top:611px;width:148px">wykończenie nóżek</div>
<div class="cell" style="left:793px;top:611px;width:146px">Montaż</div>
<div class="cell" style="left:943px;top:611px;width:147px">Montaż</div>
<div class="cell" style="left:1093px;top:611px;width:30px">Mon</div>
<div class="a" style="left:53px;top:634px;width:1070px;height:23px;background:#f4f5f8"></div>
<div class="a" style="left:42px;top:634px;width:11px;height:23px;background:linear-gradient(#eceef2 0%,#e7e9ee 45%,#dcdfe7 52%,#dbdee6 100%)"></div>
<div class="a" style="left:57px;top:637px;width:16px;height:16px;border-radius:2px;background:#0a7d14;color:#fff;font-size:14px;font-weight:bold;line-height:17px;text-align:center">S</div>
<div class="cell" style="left:77px;top:634px;width:118px">Składnik</div>
<div class="cell" style="left:200px;top:634px;width:160px">Pianka 225</div>
<div class="cell" style="left:463px;top:634px;width:37px">m3</div>
<div class="cell" style="left:503px;top:634px;width:136px">0.0400</div>
<div class="cell" style="left:643px;top:634px;width:148px">siedzisko</div>
<div class="cell" style="left:793px;top:634px;width:146px">Tapicerowanie</div>
<div class="cell" style="left:943px;top:634px;width:147px">Tapicerowanie</div>
<div class="cell" style="left:1093px;top:634px;width:30px">Tapi</div>
<div class="a" style="left:53px;top:542px;width:1070px;height:23px;border:1px dotted #1a1a1a"></div>
<svg class="a" style="left:45px;top:549px" width="6" height="8" viewBox="0 0 6 8"><path d="M1 0.5 L5 4 L1 7.5 Z" fill="#1e2230"/></svg>
<div class="a" style="left:1123px;top:491px;width:15px;height:164px;background:#eceef2"></div>
<svg class="a" style="left:1126px;top:497px" width="9" height="6" viewBox="0 0 9 6"><path d="M1 5 L4.5 1.5 L8 5 Z" fill="#9aa2ae"/></svg>
<svg class="a" style="left:1126px;top:643px" width="9" height="6" viewBox="0 0 9 6"><path d="M1 1 L4.5 4.5 L8 1 Z" fill="#9aa2ae"/></svg>
<div class="a" style="left:1124px;top:509px;width:14px;height:102px;border:1px solid #b9bfc9;border-radius:2px;background:linear-gradient(90deg,#f7f8fa 0%,#eceef2 45%,#d3d8e0 50%,#d3d8e0 100%)"></div>
<div class="a" style="left:1127px;top:557px;width:8px;height:7px;border-top:1px solid #7d8593;border-bottom:1px solid #7d8593"></div>
<div class="a" style="left:1127px;top:560px;width:8px;height:1px;background:#7d8593"></div>
<div class="a" style="left:42px;top:655px;width:1081px;height:17px;background:#eceef2"></div>
<svg class="a" style="left:47px;top:659px" width="6" height="9" viewBox="0 0 6 9"><path d="M5 1 L1.5 4.5 L5 8 Z" fill="#9aa2ae"/></svg>
<svg class="a" style="left:1112px;top:659px" width="6" height="9" viewBox="0 0 6 9"><path d="M1 1 L4.5 4.5 L1 8 Z" fill="#9aa2ae"/></svg>
<div class="a" style="left:60px;top:657px;width:503px;height:13px;border:1px solid #c2c8d1;border-radius:2px;background:linear-gradient(#f4f5f7,#d9dde4)"></div>
<div class="a" style="left:308px;top:660px;width:1px;height:7px;background:#7d8593"></div><div class="a" style="left:310px;top:660px;width:1px;height:7px;background:#7d8593"></div><div class="a" style="left:312px;top:660px;width:1px;height:7px;background:#7d8593"></div>
<div class="a" style="left:1123px;top:655px;width:15px;height:17px;background:#bcc8d9"></div>
<div class="a" style="left:584px;top:680px;width:2px;height:2px;background:#7081a0"></div>
<div class="a" style="left:588px;top:680px;width:2px;height:2px;background:#7081a0"></div>
<div class="a" style="left:592px;top:680px;width:2px;height:2px;background:#7081a0"></div>
<div class="a" style="left:596px;top:680px;width:2px;height:2px;background:#7081a0"></div>
<div class="t" style="left:504px;top:687px;font-size:10px;letter-spacing:2.75px;color:#1e2740;transform:scaleY(1.1);transform-origin:0 0">UKRYJ SZCZEGÓŁY [F8]</div>
<div class="a" style="left:8px;top:701px;width:1165px;height:40px;border:1px solid #9aa5b6;border-radius:2px;background:#bcc8d9"></div>
<div class="a" style="left:954px;top:707px;width:98px;height:28px;border:1px solid #d6cca4;border-radius:3px;background:linear-gradient(#f5f6f8 0%,#e8ebf0 45%,#d9dee6 55%,#cdd3dd 100%)"></div>
<svg class="a" style="left:972px;top:712px" width="18" height="18" viewBox="0 0 18 18"><path d="M11.5 11.5 L15.5 15.5" stroke="#f8bf45" stroke-width="3" stroke-linecap="round"/><circle cx="7.5" cy="7.5" r="5.3" fill="#62c4ec" stroke="#3b4656" stroke-width="1.6"/><circle cx="6.3" cy="6.3" r="2.2" fill="#a8e2f8"/></svg>
<div class="t" style="left:992px;top:716px;font-size:11px;color:#1d2438">Wybierz</div>
<svg class="a" style="left:1085px;top:714px" width="14" height="14" viewBox="0 0 14 14"><circle cx="7" cy="7" r="7" fill="#e3465b"/><path d="M3.5 3.5 L10.5 10.5 M10.5 3.5 L3.5 10.5" stroke="#fff" stroke-width="1.8"/></svg>
<div class="t" style="left:1104px;top:716px;font-size:11px;color:#1d2438">Anuluj</div>
<svg class="a" style="left:0;top:0" width="1181" height="749" viewBox="0 0 1181 749">
<defs><filter id="sh" x="-50%" y="-50%" width="200%" height="200%"><feGaussianBlur in="SourceAlpha" stdDeviation="2"/><feOffset dx="1" dy="2"/><feComponentTransfer><feFuncA type="linear" slope="0.35"/></feComponentTransfer><feMerge><feMergeNode/><feMergeNode in="SourceGraphic"/></feMerge></filter></defs>
<rect x="6.2" y="49.5" width="42.3" height="39" rx="5.5" fill="none" stroke="#f21218" stroke-width="2.2"/>
<g filter="url(#sh)">
<path d="M93 178 L49.4 99.6" stroke="#ec1a1f" stroke-width="2.2"/>
<path d="M44 90 L53.5 97.3 L45.3 101.9 Z" fill="#ec1a1f"/>
<path d="M116 191.8 L194 193.2" stroke="#ec1a1f" stroke-width="2.2"/>
<path d="M209 193.2 L193.5 187.6 L193.5 199.2 Z" fill="#ec1a1f"/>
<circle cx="101.5" cy="191.3" r="14.7" fill="#dc2028" stroke="#f0262c" stroke-width="1.5"/>
</g>
<text x="101.5" y="196.6" text-anchor="middle" font-family="Liberation Serif" font-size="15.5" fill="#fff">5</text>
</svg>
</body></html>
